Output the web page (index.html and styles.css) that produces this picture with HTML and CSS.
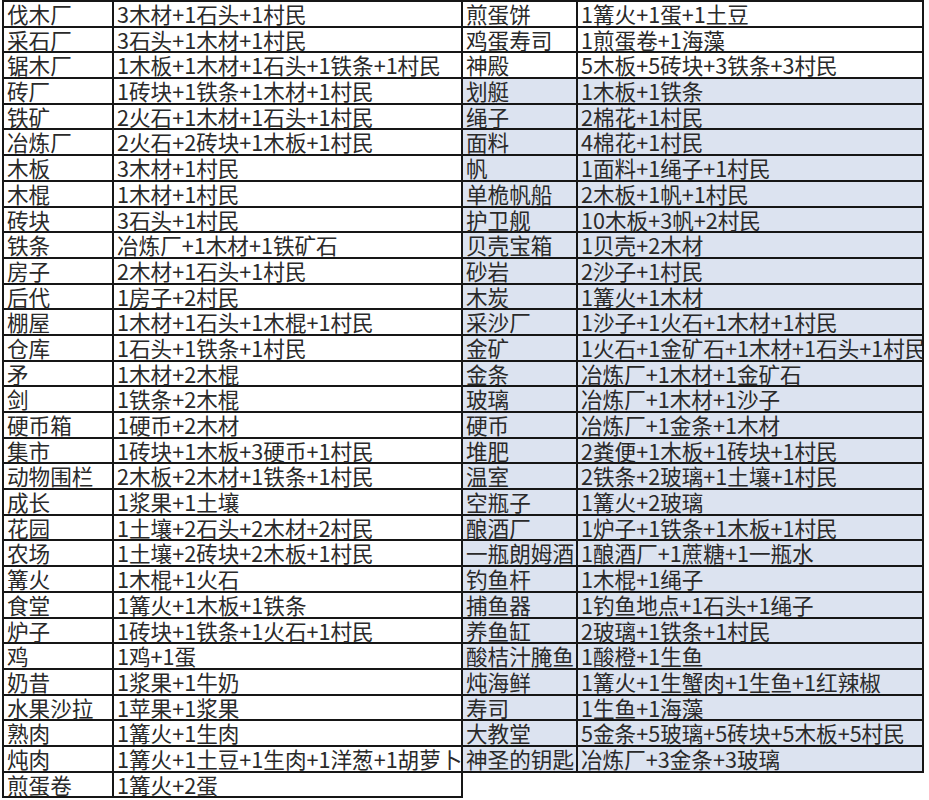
FILE: index.html
```html
<!DOCTYPE html>
<html lang="zh-CN">
<head>
<meta charset="utf-8">
<title>合成配方表</title>
<link rel="stylesheet" href="styles.css">
</head>
<body>
<div class="sheet">
  <div class="table left">
    <div class="c">伐木厂</div><div class="c">3木材+1石头+1村民</div>
    <div class="c">采石厂</div><div class="c">3石头+1木材+1村民</div>
    <div class="c">锯木厂</div><div class="c">1木板+1木材+1石头+1铁条+1村民</div>
    <div class="c">砖厂</div><div class="c">1砖块+1铁条+1木材+1村民</div>
    <div class="c">铁矿</div><div class="c">2火石+1木材+1石头+1村民</div>
    <div class="c">冶炼厂</div><div class="c">2火石+2砖块+1木板+1村民</div>
    <div class="c">木板</div><div class="c">3木材+1村民</div>
    <div class="c">木棍</div><div class="c">1木材+1村民</div>
    <div class="c">砖块</div><div class="c">3石头+1村民</div>
    <div class="c">铁条</div><div class="c">冶炼厂+1木材+1铁矿石</div>
    <div class="c">房子</div><div class="c">2木材+1石头+1村民</div>
    <div class="c">后代</div><div class="c">1房子+2村民</div>
    <div class="c">棚屋</div><div class="c">1木材+1石头+1木棍+1村民</div>
    <div class="c">仓库</div><div class="c">1石头+1铁条+1村民</div>
    <div class="c">矛</div><div class="c">1木材+2木棍</div>
    <div class="c">剑</div><div class="c">1铁条+2木棍</div>
    <div class="c">硬币箱</div><div class="c">1硬币+2木材</div>
    <div class="c">集市</div><div class="c">1砖块+1木板+3硬币+1村民</div>
    <div class="c">动物围栏</div><div class="c">2木板+2木材+1铁条+1村民</div>
    <div class="c">成长</div><div class="c">1浆果+1土壤</div>
    <div class="c">花园</div><div class="c">1土壤+2石头+2木材+2村民</div>
    <div class="c">农场</div><div class="c">1土壤+2砖块+2木板+1村民</div>
    <div class="c">篝火</div><div class="c">1木棍+1火石</div>
    <div class="c">食堂</div><div class="c">1篝火+1木板+1铁条</div>
    <div class="c">炉子</div><div class="c">1砖块+1铁条+1火石+1村民</div>
    <div class="c">鸡</div><div class="c">1鸡+1蛋</div>
    <div class="c">奶昔</div><div class="c">1浆果+1牛奶</div>
    <div class="c">水果沙拉</div><div class="c">1苹果+1浆果</div>
    <div class="c">熟肉</div><div class="c">1篝火+1生肉</div>
    <div class="c">炖肉</div><div class="c">1篝火+1土豆+1生肉+1洋葱+1胡萝卜</div>
    <div class="c">煎蛋卷</div><div class="c">1篝火+2蛋</div>
  </div>
  <div class="table right">
    <div class="c">煎蛋饼</div><div class="c">1篝火+1蛋+1土豆</div>
    <div class="c">鸡蛋寿司</div><div class="c">1煎蛋卷+1海藻</div>
    <div class="c">神殿</div><div class="c">5木板+5砖块+3铁条+3村民</div>
    <div class="c b">划艇</div><div class="c b">1木板+1铁条</div>
    <div class="c b">绳子</div><div class="c b">2棉花+1村民</div>
    <div class="c b">面料</div><div class="c b">4棉花+1村民</div>
    <div class="c b">帆</div><div class="c b">1面料+1绳子+1村民</div>
    <div class="c b">单桅帆船</div><div class="c b">2木板+1帆+1村民</div>
    <div class="c b">护卫舰</div><div class="c b">10木板+3帆+2村民</div>
    <div class="c b">贝壳宝箱</div><div class="c b">1贝壳+2木材</div>
    <div class="c b">砂岩</div><div class="c b">2沙子+1村民</div>
    <div class="c b">木炭</div><div class="c b">1篝火+1木材</div>
    <div class="c b">采沙厂</div><div class="c b">1沙子+1火石+1木材+1村民</div>
    <div class="c b">金矿</div><div class="c b">1火石+1金矿石+1木材+1石头+1村民</div>
    <div class="c b">金条</div><div class="c b">冶炼厂+1木材+1金矿石</div>
    <div class="c b">玻璃</div><div class="c b">冶炼厂+1木材+1沙子</div>
    <div class="c b">硬币</div><div class="c b">冶炼厂+1金条+1木材</div>
    <div class="c b">堆肥</div><div class="c b">2粪便+1木板+1砖块+1村民</div>
    <div class="c b">温室</div><div class="c b">2铁条+2玻璃+1土壤+1村民</div>
    <div class="c b">空瓶子</div><div class="c b">1篝火+2玻璃</div>
    <div class="c b">酿酒厂</div><div class="c b">1炉子+1铁条+1木板+1村民</div>
    <div class="c b">一瓶朗姆酒</div><div class="c b">1酿酒厂+1蔗糖+1一瓶水</div>
    <div class="c b">钓鱼杆</div><div class="c b">1木棍+1绳子</div>
    <div class="c b">捕鱼器</div><div class="c b">1钓鱼地点+1石头+1绳子</div>
    <div class="c b">养鱼缸</div><div class="c b">2玻璃+1铁条+1村民</div>
    <div class="c b">酸桔汁腌鱼</div><div class="c b">1酸橙+1生鱼</div>
    <div class="c b">炖海鲜</div><div class="c b">1篝火+1生蟹肉+1生鱼+1红辣椒</div>
    <div class="c b">寿司</div><div class="c b">1生鱼+1海藻</div>
    <div class="c b">大教堂</div><div class="c b">5金条+5玻璃+5砖块+5木板+5村民</div>
    <div class="c b">神圣的钥匙</div><div class="c b">冶炼厂+3金条+3玻璃</div>
  </div>
</div>
</body>
</html>
```

FILE: styles.css
```css
html, body {
  margin: 0;
  padding: 0;
  background: #ffffff;
}

body {
  width: 929px;
  height: 800px;
  overflow: hidden;
  font-family: "Noto Sans CJK SC", "Noto Sans", sans-serif;
  color: #2a2a2a;
}

.sheet {
  display: flex;
  align-items: flex-start;
  padding-left: 2px;
}

.table {
  display: grid;
  grid-auto-rows: 25.7px;
  border-top: 2px solid #161616;
}

.left {
  grid-template-columns: 110px 349px;
  border-left: 2px solid #161616;
}

.right {
  grid-template-columns: 115px 346px;
}

.c {
  box-sizing: border-box;
  border-right: 2px solid #161616;
  border-bottom: 2px solid #161616;
  padding-left: 3px;
  font-size: 21.6px;
  line-height: 23.7px;
  white-space: nowrap;
  overflow-x: clip;
  overflow-y: visible;
}

.b {
  background: #dce3f0;
}
```
